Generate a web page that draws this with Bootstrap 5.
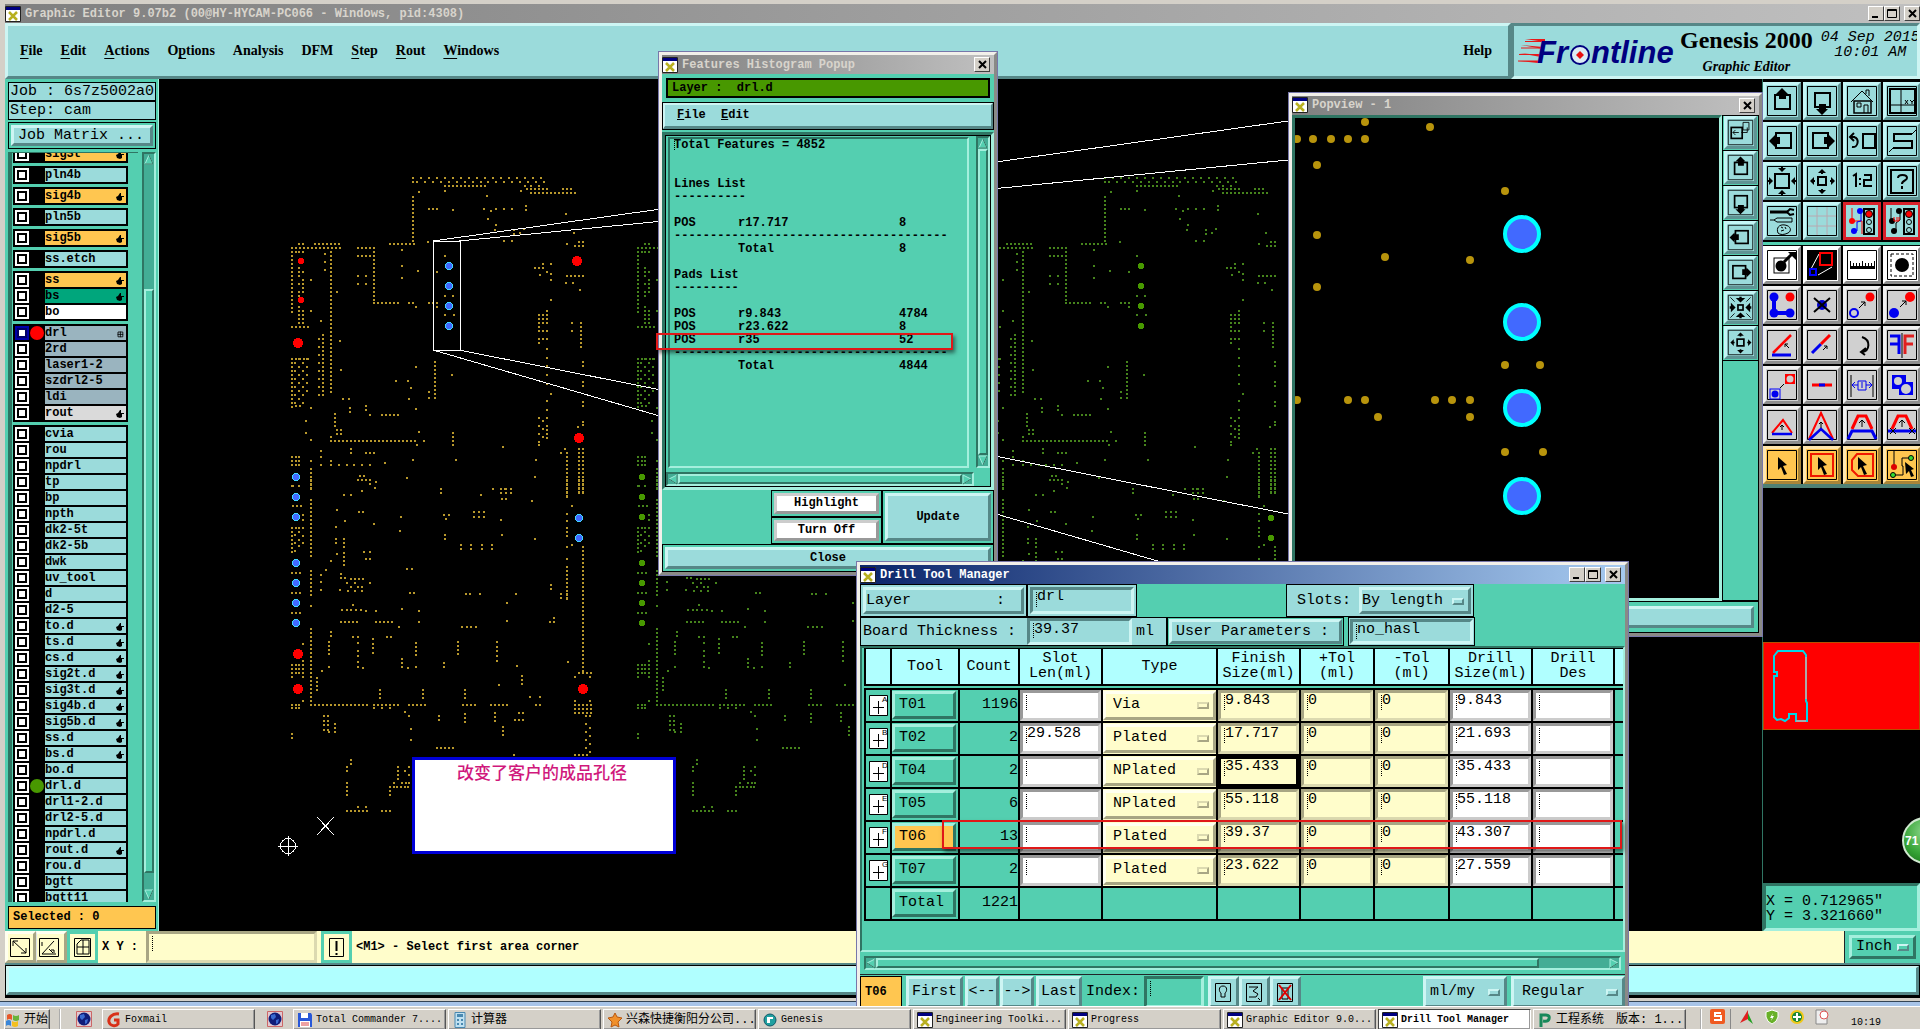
<!DOCTYPE html>
<html lang="en">
<head>
<meta charset="utf-8">
<meta name="viewport" content="width=device-width, initial-scale=1">
<title>Graphic Editor 9.07b2</title>
<link href="https://cdn.jsdelivr.net/npm/bootstrap@5.3.0/dist/css/bootstrap.min.css" rel="stylesheet">
<style>
:root{--teal:#54cfb0;--teal-d:#2f7563;--teal-l:#a4efdd;--cy:#9bdbdb;--cy-d:#568787;--cy-l:#cdf5f3;--ye:#fffdcb;--gr:#d4d0c8;--or:#ffc650}
body{font-family:"Liberation Mono","Noto Sans CJK SC",monospace;font-size:15px;line-height:18px;color:#000;background:#000}
button,input,select{font:inherit;color:inherit;border-radius:0;padding:0;margin:0}
button{text-align:left}
.desk{height:100vh}
.t12{font-size:12px;line-height:13px;font-weight:700}
.cy{background:var(--cy)}.teal{background:var(--teal)}.ye{background:var(--ye)}.orng{background:var(--or)}
.up{border:3px solid;border-color:var(--cy-l) var(--cy-d) var(--cy-d) var(--cy-l)}
.dn{border:3px solid;border-color:var(--cy-d) var(--cy-l) var(--cy-l) var(--cy-d)}
.teal.up{border-color:var(--teal-l) var(--teal-d) var(--teal-d) var(--teal-l)}
.teal.dn{border-color:var(--teal-d) var(--teal-l) var(--teal-l) var(--teal-d)}
.ye.up{border-color:#fffff0 #a8a684 #a8a684 #fffff0}
.ye.dn{border-color:#a8a684 #dcdab0 #dcdab0 #a8a684}
.wh{background:#fff}.wh.dn{border-color:#999 #ccc #ccc #999}.wh.up{border-color:#ccc #999 #999 #ccc}
.ln{border:1px solid #000}
.up,.dn{outline:0}
/* window chrome */
.frame{border:3px solid;border-color:#f2f0ea #8a8a86 #8a8a86 #f2f0ea;background:var(--gr);box-shadow:0 0 0 1px #77a}
.tbar{height:19px;background:linear-gradient(90deg,#808080,#c0c0c0);color:#d8d4cc;font-size:12px;font-weight:700;gap:4px}
.tbar.on{background:linear-gradient(90deg,#0a246a,#a6caf0);color:#fff}
.cap{width:16px;height:15px;background:var(--gr);border:1px solid;border-color:#fff #404040 #404040 #fff;display:flex}
.cap svg{width:14px;height:13px}
.app{border-left:5px solid var(--gr);border-top:4px solid var(--gr)}
.menubar{height:56px}
.menubar nav{font-family:"Liberation Serif",serif;font-weight:700;font-size:14px}
.menubar nav a{color:#000;text-decoration:none;margin-right:18px}
.menubar u{text-underline-offset:3px}
.brandbox{width:409px;border-color:var(--cy-d) var(--cy-l) var(--cy-l) var(--cy-d)}
.gen{font:700 24px/28px "Liberation Serif",serif}
.ged{font:italic 700 14px/18px "Liberation Serif",serif}
.clock{font-style:italic;line-height:15px;font-size:15px;white-space:nowrap}
/* layer list */
.side{width:154px;padding:3px 2px 2px 3px;border-right:1px solid var(--teal-l)}
.jobline{height:19px;padding-left:1px;white-space:nowrap;overflow:hidden}
.jm{height:27px;margin:2px 0 3px;padding:2px}
.layers{border-left:4px solid var(--teal-d);border-top:1px solid var(--teal-d);padding:0 10px 0 1px}
.stack{margin-top:-8px}
.grp{background:#000;padding:1px;margin-bottom:3px}
.lay{height:16px;padding:1px}
.lay input{appearance:none;width:14px;height:14px;border:2px solid #fff;background:#fff;box-shadow:inset 0 0 0 2px #000;flex:none}
.lay input:checked{border-color:#00a;box-shadow:inset 0 0 0 2px #006}
.bul{width:16px;height:14px;flex:none;display:flex;justify-content:center}
.bul i{width:14px;height:14px;border-radius:50%}
.lay label{flex:1;height:14px;line-height:14px;position:relative;background:var(--cy);overflow:hidden;white-space:nowrap}
.lay svg{position:absolute;right:2px;top:4px;width:8px;height:8px}
.vbar{width:14px;background:#43ad95;border:2px solid;border-color:var(--teal-d) var(--teal-l) var(--teal-l) var(--teal-d)}
.hbar{height:14px;background:#43ad95;border:2px solid;border-color:var(--teal-d) var(--teal-l) var(--teal-l) var(--teal-d)}
.ar{width:10px;height:11px;flex:none;display:block}
.thumb{background:var(--teal);border:2px solid;border-color:var(--teal-l) var(--teal-d) var(--teal-d) var(--teal-l)}
/* tool palette */
.pal{width:158px;border-left:1px solid var(--teal-d);padding-top:3px}
.grid4{display:grid;grid-template-columns:repeat(4,38px);grid-auto-rows:38px;gap:2px}
.tool{width:38px;height:38px;border:3px solid;padding:0;display:block;background:var(--cy);border-color:#c4f6f6 #5f9494 #5f9494 #c4f6f6}
.tool svg{width:32px;height:32px;display:block}
.tool.g{background:#d0d0d0;border-color:#f0f0f0 #8d8d8d #8d8d8d #f0f0f0}
.tool.w{background:#fff;border-color:#fff #8d8d8d #8d8d8d #fff}
.tool.o{background:#ffc650;border-color:#ffe6ae #a88438 #a88438 #ffe6ae}
.tool.r{border-color:#d8202a}
.mini{width:33px;height:33px}.mini svg{width:27px;height:27px}
.caret{background-image:repeating-linear-gradient(#000 0 1px,transparent 1px 2px);background-size:1px 16px;background-repeat:no-repeat;background-position:3px 2px}
.pick{position:relative;display:flex}
.pick select{appearance:none;background:transparent;border:0;width:100%;outline:0;color:#000}
.pick:after{content:"";position:absolute;right:4px;top:50%;margin-top:-3px;width:12px;height:7px;border:2px solid;border-color:var(--cy-l) var(--cy-d) var(--cy-d) var(--cy-l)}
.ye.pick:after{border-color:#dcdab0 #a8a684 #a8a684 #dcdab0}
.sq{width:31px;height:32px;padding:0}.sq svg{width:24px;height:24px;display:block}
/* free windows */
.feat{left:659px;top:52px;width:338px;height:523px}
.popv{left:1289px;top:93px;width:473px;height:543px}
.drill{left:857px;top:562px;width:771px;height:460px}
.note{left:412px;top:757px;width:264px;height:97px;border:3px solid #0000d8;background:#fff;color:#d0187c;font:500 17px/24px "Noto Sans CJK SC",sans-serif;padding-right:4px}
.mark{border:2px solid #e01818;box-shadow:2px 3px 4px rgba(0,0,0,.5);pointer-events:none;background:none;padding:0}
.mark.m1{left:656px;top:333px;width:297px;height:17px}
.mark.m2{left:942px;top:820px;width:680px;height:29px}
.rowl{display:grid;grid-template-columns:64px 161px 1fr}
.blk{margin-bottom:13px;white-space:pre}
.ball{right:-29px;top:817px;width:47px;height:47px;border-radius:50%;background:radial-gradient(circle at 50% 30%,#8fd88f,#36a436 60%,#187018);border:2px solid #cfe8cf;color:#fff;font:700 12px/44px "Liberation Sans",sans-serif;padding-left:1px}
.dt{table-layout:fixed;width:764px;border-collapse:collapse}
.dt th{background:#b0ffff;border:2px solid #000;border-top-width:1px;font-weight:400;text-align:center;height:36px;padding:0;line-height:15px;white-space:nowrap;vertical-align:middle}
.dt tbody:before{content:"";display:block;height:2px}
.dt td{border:2px solid #000;height:33px;padding:0;background:var(--teal);vertical-align:middle}
.dt td>input,.dt td>.pick{width:100%;height:31px;display:block}
.dt td>input{padding:0 0 9px 4px;border-width:3px}
.dt td>.pick{display:flex;height:29px;margin:1px 0}
.dt .pick select{padding-left:7px}
.dt td.y{background:var(--ye)}.dt td.w0{background:#fff}
.tb{width:64px;height:28px;display:block;padding-left:4px}
.abox{width:19px;height:21px;display:block;margin:auto}
.bb{height:34px;white-space:nowrap;padding-top:1px}
.task{height:23px;background:var(--gr);border-top:1px solid #fff;z-index:30;font:10px/18px "Liberation Mono","Noto Sans CJK SC",monospace;position:relative;padding-top:2px}
.task button{height:21px;width:153px;margin-right:2px;background:var(--gr);border:1px solid;border-color:#fff #555 #555 #fff;box-shadow:inset -1px -1px #999;display:flex;align-items:center;gap:3px;padding-left:3px;flex:none;white-space:nowrap;overflow:hidden}
.task .cn{font-size:12px}
.task svg{flex:none}
.task button.act{background:#fff;border-color:#444 #fff #fff #444;font-weight:700}
.blue{height:5px;background:#a8c4e8;border-top:1px solid #345}
.msgbar{height:35px;padding:1px 1px 3px;background:#000;border-top:2px solid #568787}
.msgbar div{height:29px;background:#b0ffff;border-width:2px 3px 3px}
.statbar{height:32px}
.statbar .on1{border-color:var(--teal)}
.rule{height:3px;margin:2px 0 1px}
.rule2{height:4px;background:#4f8074}
.thumbmap{height:88px;background:#f00;border:1px solid #b85000}
.sunk{border:3px solid;border-color:var(--teal-d) var(--teal-l) var(--teal-l) var(--teal-d)}
.laybar{background:#489800;border:2px solid #000;line-height:16px;white-space:pre}
</style>
</head>
<body class="overflow-hidden">
<svg width="0" height="0" class="position-absolute">
<symbol id="win" viewBox="0 0 16 16"><path fill="#fff" stroke="#222" d="M.5.5h15v15H.5z"/><path fill="#000080" d="M1 1h14v3H1z"/><path stroke="#b8b020" stroke-width="2.5" d="M4 6l8 8M12 6l-8 8"/></symbol>
<symbol id="hand" viewBox="0 0 8 8"><path d="M0 4l2-1 2-3h1v3h3v1H6v3L4 8 1 7z"/></symbol>
<symbol id="cx" viewBox="0 0 14 13"><path stroke="#000" stroke-width="2" d="M4 3l7 7M11 3l-7 7"/></symbol>
<symbol id="cm" viewBox="0 0 14 13"><path fill="#000" d="M3 9h6v2H3z"/></symbol>
<symbol id="cq" viewBox="0 0 14 13"><path fill="none" stroke="#000" d="M2.500 2.500h9v8h-9zM2 3.500h10"/></symbol>
<symbol id="up" viewBox="0 0 10 11"><path fill="#54cfb0" stroke="#a4efdd" d="M5 1L1 10h8z"/><path stroke="#2f7563" d="M5 1l4 9H1" fill="none"/></symbol>
<symbol id="dw" viewBox="0 0 10 11"><path fill="#54cfb0" stroke="#a4efdd" d="M5 10L1 1h8z"/><path stroke="#2f7563" d="M9 1L5 10" fill="none"/></symbol>
<symbol id="lf" viewBox="0 0 10 11"><path fill="#54cfb0" stroke="#a4efdd" d="M1 5l8-4v9z"/><path stroke="#2f7563" d="M9 1v9L1 5" fill="none"/></symbol>
<symbol id="rt" viewBox="0 0 10 11"><path fill="#54cfb0" stroke="#a4efdd" d="M9 5L1 1v9z"/><path stroke="#2f7563" d="M1 10l8-5" fill="none"/></symbol>
<symbol id="globe" viewBox="0 0 16 16"><path fill="#e0c8d0" stroke="#c66" d="M.5.5h15v15H.5z"/><circle cx="8" cy="8" r="6.500" fill="#101c78"/><path fill="#3a6ad0" d="M4 4l4-1 1 3-3 3-2-2zM9 9l3-1-1 4-2 1z"/></symbol>
</svg>

<div class="desk d-flex flex-column position-relative overflow-hidden">
 <main class="app flex-fill d-flex flex-column overflow-hidden">
  <div class="tbar d-flex align-items-center flex-shrink-0"><svg width="16" height="16"><use href="#win"/></svg><span class="flex-fill">Graphic Editor 9.07b2 (00@HY-HYCAM-PC066 - Windows, pid:4308)</span>
   <span class="d-flex"><span class="cap"><svg><use href="#cm"/></svg></span><span class="cap"><svg><use href="#cq"/></svg></span></span><span class="cap"><svg><use href="#cx"/></svg></span></div>
  <header class="menubar d-flex cy flex-shrink-0">
   <nav class="up flex-fill d-flex align-items-center ps-2">
    <a class="ms-1" href="#"><u>F</u>ile</a><a href="#"><u>E</u>dit</a><a href="#"><u>A</u>ctions</a><a href="#">O<u>p</u>tions</a><a href="#">Analysis</a><a href="#">DFM</a><a href="#"><u>S</u>tep</a><a href="#"><u>R</u>out</a><a href="#"><u>W</u>indows</a><a class="ms-auto me-3" href="#">Help</a>
   </nav>
   <div class="brandbox up d-flex cy overflow-hidden ps-1">
    <svg width="162" height="48" viewBox="0 0 162 48" class="flex-shrink-0"><g fill="#e81818"><path d="M7 13l20 0v3zM3 19l22 2v2zM1 27l22 2v2zM0 35l20 0v2z"/><path d="M7 15.500h17M3 22h20M1 28.500h20M0 35h20" stroke="#e81818"/></g><g fill="#000080" font-family="Liberation Sans" font-style="italic" font-weight="700" font-size="31"><text x="19" y="37">Fr</text><text x="73" y="37">ntline</text></g><circle cx="62" cy="29" r="9" fill="#dcecf4" stroke="#000080" stroke-width="2"/><path fill="#e81010" d="M62 25l4 4-4 4-4-4z"/></svg>
    <div class="text-center flex-shrink-0"><div class="gen">Genesis 2000</div><div class="ged pt-1">Graphic Editor</div></div>
    <div class="clock text-center ps-2 pt-1">04 Sep 2015<br>10:01 AM</div>
   </div>
  </header>
  <div class="d-flex flex-fill overflow-hidden bg-black">
   <aside class="side teal d-flex flex-column flex-shrink-0">
    <div class="jobline cy ln">Job : 6s7z5002a0</div><div class="jobline cy ln">Step: cam</div>
    <div class="ln jm"><button class="cy up w-100 h-100 d-block ps-1 lh-1">Job Matrix ...</button></div>
    <div class="d-flex flex-fill overflow-hidden">
     <div class="layers flex-fill overflow-hidden t12"><div class="stack" id="stack"></div></div>
     <div class="vbar d-flex flex-column ms-1"><svg class="ar"><use href="#up"/></svg><div class="flex-fill d-flex flex-column pb-3"><div class="thumb flex-fill" id="vth"></div></div><svg class="ar"><use href="#dw"/></svg></div>
    </div>
    <div class="ln orng t12 mt-1 ps-1 py-1">Selected : 0</div>
   </aside>
   <section class="flex-fill position-relative overflow-hidden"><svg id="board" width="1602" height="852" viewBox="159 80 1602 852" class="position-absolute top-0 start-0" shape-rendering="crispEdges"></svg></section>
   <aside class="pal d-flex flex-column flex-shrink-0 overflow-hidden">
    <div class="grid4" id="g1"></div>
    <div class="teal rule"></div>
    <div class="grid4" id="g2"></div>
    <div class="rule2"></div>
    <div class="flex-fill"></div>
    <div class="thumbmap"><svg width="50" height="86"><path fill="none" stroke="#00d8e8" stroke-width="2" d="M14 8h25l3 4v46l1 2v18H32v-7h-7v4l-4 3-4-2-4 1-3-3V33h3v-4h-3V13z"/><path fill="none" stroke="#aaa" stroke-width="2" d="M42 14v42M32 78h10"/></svg></div>
    <div class="flex-fill"></div>
    <div class="teal dn w-100 pt-2 pb-1 text-nowrap"><div class="lh-1">X = 0.712965"</div><div class="lh-1">Y = 3.321660"</div></div>
   </aside>
  </div>
  <footer class="statbar d-flex ye flex-shrink-0">
   <button class="sq ye up" title="Zoom"><svg viewBox="0 0 24 24" fill="none" stroke="#000"><path d="M2.500 3.500h19v18h-19zM5 6l13 12M5 11V6h5M18 13v5h-5"/></svg></button>
   <button class="sq ye up border-start" title="Angle"><svg viewBox="0 0 24 24" fill="none" stroke="#000"><path d="M2.500 3.500h19v18h-19zM5 19L17 6M5 7v4M5 19h14M12 14l4 4M14 15h3v3"/></svg></button>
   <button class="sq ye up on1" title="Snap"><svg viewBox="0 0 24 24" fill="none" stroke="#000"><path d="M4.500 3.500h16v18h-16zM7 19V9l4-4h8v14zM7 12h12M13 5v14"/></svg></button>
   <label for="xy" class="t12 align-self-center px-1 text-nowrap">X Y :</label>
   <input id="xy" class="ye dn caret h-100 mx-1" style="width:171px">
   <button class="sq ye up on1" title="Messages"><svg viewBox="0 0 24 24" fill="none" stroke="#000"><path d="M5.500 3.500h14v18h-14z"/><path stroke-width="2" d="M12.500 6v10M12.500 18v2"/></svg></button>
   <div class="flex-fill t12 align-self-center ps-1">&lt;M1&gt; - Select first area corner</div>
   <div class="teal p-1 border-start border-dark"><div class="pick teal up h-100" style="width:67px"><select aria-label="Units" class="ps-1"><option>Inch</option></select></div></div>
  </footer>
  <div class="msgbar flex-shrink-0"><div class="up"></div></div>
  <div style="height:3px;background:#d4d0c8"></div>
 </main>
 <div class="blue flex-shrink-0"></div>
 <div class="task d-flex flex-shrink-0 align-items-start overflow-hidden" id="task"></div>

 <!-- board note -->
 <div class="note position-absolute text-center">改变了客户的成品孔径</div>

 <!-- popview -->
 <section class="popv frame position-absolute d-flex flex-column">
  <div class="tbar d-flex align-items-center"><svg width="16" height="16"><use href="#win"/></svg><span class="flex-fill">Popview - 1</span><span class="cap me-1"><svg><use href="#cx"/></svg></span></div>
  <div class="d-flex flex-fill overflow-hidden">
   <div class="bg-black flex-fill overflow-hidden sunk"><svg id="pv" width="422" height="486" viewBox="1295 118 422 486"></svg></div>
   <div class="teal ln" style="width:37px"><div class="d-flex flex-column" id="g3"></div></div>
  </div>
  <div class="teal ln p-1 pb-0"><div class="cy up mb-1" style="height:22px"></div></div>
 </section>

 <!-- histogram -->
 <section class="feat frame position-absolute d-flex flex-column">
  <div class="tbar d-flex align-items-center"><svg width="16" height="16"><use href="#win"/></svg><span class="flex-fill">Features Histogram Popup</span><span class="cap me-1"><svg><use href="#cx"/></svg></span></div>
  <div class="teal flex-fill d-flex flex-column t12">
   <div class="m-1 ps-1 laybar">Layer :  drl.d</div>
   <div class="ln"><div class="cy up ps-2 py-1" style="border-width:2px 2px 3px"><span class="mx-1"><u>F</u>ile</span> <span class="mx-1"><u>E</u>dit</span></div></div>
   <div class="flex-fill d-flex flex-column sunk" style="margin-top:2px"><div class="ln flex-fill d-flex flex-column">
    <div class="d-flex flex-fill">
     <div class="teal dn flex-fill ps-1" style="margin:1px 7px 4px 2px;border-width:2px">
      <div class="blk caret" style="margin-bottom:26px;background-position:0 0;background-size:1px 12px">Total Features = 4852</div>
      <div class="blk">Lines List
----------</div>
      <div class="blk"><div class="rowl"><span>POS</span><span>r17.717</span><span>8</span></div><div>--------------------------------------</div><div class="rowl"><span></span><span>Total</span><span>8</span></div></div>
      <div class="blk">Pads List
---------</div>
      <div class="blk"><div class="rowl"><span>POS</span><span>r9.843</span><span>4784</span></div><div class="rowl"><span>POS</span><span>r23.622</span><span>8</span></div><div class="rowl"><span>POS</span><span>r35</span><span>52</span></div><div>--------------------------------------</div><div class="rowl"><span></span><span>Total</span><span>4844</span></div></div>
     </div>
     <div class="vbar d-flex flex-column mb-1"><svg class="ar"><use href="#up"/></svg><div class="thumb flex-fill"></div><svg class="ar"><use href="#dw"/></svg></div>
    </div>
    <div class="hbar d-flex me-3"><svg class="ar"><use href="#lf"/></svg><div class="thumb flex-fill"></div><svg class="ar"><use href="#rt"/></svg></div>
   </div></div>
   <div class="d-flex"><div class="flex-fill"></div>
    <div style="width:111px"><div class="ln" style="padding:2px"><button class="wh up w-100 text-center d-block" style="height:21px">Highlight</button></div><div class="ln" style="padding:2px"><button class="wh up w-100 text-center d-block" style="height:21px">Turn Off</button></div></div>
    <div class="ln" style="width:112px;padding:2px"><button class="cy up w-100 h-100 text-center">Update</button></div></div>
   <div class="ln" style="padding:2px"><button class="cy up w-100 text-center d-block" style="height:22px;line-height:14px">Close</button></div>
  </div>
 </section>

 <!-- drill tool manager -->
 <section class="drill frame position-absolute">
  <div class="tbar on d-flex align-items-center"><svg width="16" height="16"><use href="#win"/></svg><span class="flex-fill">Drill Tool Manager</span><span class="d-flex"><span class="cap"><svg><use href="#cm"/></svg></span><span class="cap"><svg><use href="#cq"/></svg></span></span><span class="cap me-1"><svg><use href="#cx"/></svg></span></div>
  <div class="teal">
   <div class="d-flex" style="height:33px">
    <div class="ln cy" style="width:167px;padding:2px"><button class="cy up w-100 h-100 d-flex align-items-center justify-content-between pe-3"><span>Layer</span><span>:</span></button></div>
    <div class="ln cy" style="width:110px;padding:2px"><input aria-label="Layer" class="cy dn caret w-100 h-100 ps-1 pb-2" value="drl"></div>
    <div class="ln cy d-flex align-items-center" style="width:188px;margin-left:149px;padding:2px"><label for="slots" class="px-2">Slots:</label><div class="pick cy up h-100 flex-fill"><select id="slots"><option>By length</option></select></div></div>
   </div>
   <div class="d-flex" style="height:29px">
    <div class="ln cy d-flex align-items-center" style="width:307px;padding-left:2px"><label for="bt" class="flex-fill text-nowrap">Board Thickness :</label><input id="bt" class="cy dn caret h-100 ps-1 pb-1" style="width:105px" value="39.37"><span class="px-1 me-2">ml</span></div>
    <div class="ln teal" style="width:177px;padding:1px"><button class="cy up w-100 h-100 ps-1 lh-1">User Parameters :</button></div>
    <div class="ln cy ms-1" style="width:127px;padding:1px"><input aria-label="User parameters" class="cy dn caret w-100 h-100 ps-1 pb-1" value="no_hasl"></div>
   </div>
   <div class="overflow-hidden" style="height:306px;border:2px solid;border-color:#2f7563 #a4efdd #a4efdd #2f7563;padding-left:2px"><table class="dt"><colgroup><col style="width:26px"><col style="width:68px"><col style="width:60px"><col style="width:83px"><col style="width:115px"><col style="width:83px"><col style="width:74px"><col style="width:75px"><col style="width:83px"><col style="width:82px"><col style="width:15px"></colgroup>
    <thead><tr><th></th><th>Tool</th><th>Count</th><th>Slot<br>Len(ml)</th><th>Type</th><th>Finish<br>Size(ml)</th><th>+Tol<br>(ml)</th><th>-Tol<br>(ml)</th><th>Drill<br>Size(ml)</th><th>Drill<br>Des</th><th></th></tr></thead><tbody id="dtb"></tbody></table></div>
   <div class="hbar d-flex m-1"><svg class="ar"><use href="#lf"/></svg><div class="thumb" style="width:88%"></div><div class="flex-fill"></div><svg class="ar"><use href="#rt"/></svg></div>
   <div class="d-flex bb border-top border-dark">
    <div class="orng ln t12 d-flex align-items-center ps-1" style="width:42px">T06</div>
    <button class="cy up ms-1 text-center" style="width:57px">First</button><button class="cy up text-center" style="width:34px;margin-left:2px">&lt;--</button><button class="cy up text-center" style="width:34px;margin-left:1px">--&gt;</button><button class="cy up text-center" style="width:46px;margin-left:2px">Last</button>
    <label for="ix" class="ps-1 align-self-center">Index:</label><input id="ix" class="teal dn caret ms-1" style="width:60px">
    <button class="cy up sq ms-1" title="Light"><svg viewBox="0 0 24 24" fill="none" stroke="#000"><path d="M4.500 3.500h15v18h-15zM12 6c-5 0-4 6-2 7v4h4v-4c2-1 3-7-2-7z"/></svg></button><button class="cy up sq" title="Next"><svg viewBox="0 0 24 24" fill="none" stroke="#000"><path d="M4.500 3.500h15v18h-15zM7 7h9l-5 4 5 3-2 3H7M16 18l2 2"/></svg></button><button class="cy up sq" title="Delete"><svg viewBox="0 0 24 24" fill="none" stroke="#000"><path d="M4.500 3.500h15v18h-15zM9 8h6v11H9z"/><path stroke="#d00" stroke-width="2" d="M6 5l12 15M18 5L6 20"/></svg></button>
    <div class="pick cy up ms-auto" style="width:84px"><select aria-label="Unit" class="ps-1"><option>ml/my</option></select></div><div class="pick cy up ms-1" style="width:114px"><select aria-label="Mode" class="ps-2"><option>Regular</option></select></div>
   </div>
  </div>
 </section>
 <div class="mark m1 position-absolute"></div><div class="mark m2 position-absolute"></div>
 <div class="ball position-absolute">71</div>
</div>

<script src="https://cdn.jsdelivr.net/npm/bootstrap@5.3.0/dist/js/bootstrap.bundle.min.js"></script>
<script>
const $=id=>document.getElementById(id);
// layers: name|colour|flags (h = hand, m = matrix mark)
const groups=["sig3t|o|h","pln4b","sig4b|o|h","pln5b","sig5b|o|h","ss.etch","ss|o|h,bs|g|h,bo|w","drl|s|m,2rd|s,laser1-2|s,szdrl2-5|s,ldi|s,rout|l|h",
"cvia,rou,npdrl,tp,bp,npth,dk2-5t,dk2-5b,dwk,uv_tool,d,d2-5,to.d||h,ts.d||h,cs.d||h,sig2t.d||h,sig3t.d||h,sig4b.d||h,sig5b.d||h,ss.d||h,bs.d||h,bo.d,drl.d,drl1-2.d,drl2-5.d,npdrl.d,rout.d||h,rou.d,bgtt,bgtt11"];
const col={o:'#ffc650',g:'#00a67c',w:'#fff',s:'#9ab4bf',l:'#dadada'};let n=0;
$('stack').innerHTML=groups.map(g=>'<div class="grp">'+g.split(',').map(r=>{const [nm,c,f]=r.split('|');n++;
 const b=nm=='drl'?'#f00':nm=='drl.d'?'#489800':'';
 return `<div class="lay d-flex"><input type="checkbox" id="l${n}"${nm=='drl'?' checked':''}><span class="bul">${b?`<i style="background:${b}"></i>`:''}</span><label for="l${n}"${c?` style="background:${col[c]}"`:''}>${nm}${f=='h'?'<svg><use href="#hand"/></svg>':f=='m'?'<svg viewBox="0 0 10 10"><path fill="none" stroke="#000" d="M2.500 2.500h6v6h-6zM5.500 2v7M2 5.500h7"/></svg>':''}</label></div>`}).join('')+'</div>').join('');
$('vth').style.marginTop='124px';
$('vth').parentNode.style.background='#43ad95';

// drill pattern: "x y nx ny stepx stepy" in thirds of a pixel
const A="399 57 17 1 24;399 69;411 69 9 1 24;624 69 8 1 24;495 81 11;735 81;753 81;777 81;741 90 6;849 90 3;753 102 12;417 99;495 96;621 111;723 96;519 153;447 150 3;612 150;633 156;648 150 3 1 24;738 141 1 2;624 180;648 198;645 213;702 213 1 2;732 210;720 222;672 246;696 246;858 165;882 222;399 114 1 12;330 255 7;444 249;366 273;366 321;366 357;414 336;861 255;885 261;897 249 2 2;57 255 2;105 255 7;36 267 13;36 279 4 1 11;36 291 1 15;57 327 1 2;69 339;57 351;69 363;57 375 2;69 387;57 399 2;57 411;57 444;69 456;57 456 2 4;36 504 5;93 363;93 456;135 285;135 309;135 333;153 279 1 36;171 399;123 486;117 540 1 8 12 24;129 528 1 16;180 546;183 633;234 267 5;282 279 1 13;234 291 4;234 351 2 2 24 24;282 432 7;387 432 2;408 444;447 432 3;471 444;495 291;471 339;495 411 2 1 24;495 468;522 468;36 600 5;36 600 1 13;45 612 1 6 12 24;57 600 1 6 12 24;69 612 1 6 12 24;81 600 1 5 12 24;48 741 2;465 609 1 10;447 699;447 717;408 624;516 648;348 666;384 666;393 687;387 720;408 750;189 720 2 1 18;210 747 1 2;258 741 1 2;270 768;306 768 5;165 765 1 4;171 813 2 2;93 747;78 786;78 822;93 843;153 834;153 846 22;411 858;417 819;432 846;519 822 1 4;213 870 1 2;258 882 3;123 876 1 2 12 18;36 894 3 3 11;93 906;93 930 1 6;123 918;153 906 1 2;177 918 5 1 23;315 912;399 903;528 903;669 864;381 957;240 951 2;234 963 4;270 975;288 969;285 987;246 996;192 1008 2 1 21;483 990 1 2;603 1008;639 990;663 990 2;693 990;663 1002 3 1 15;768 903;765 954;765 327 3;789 315 2 1 24;801 339;813 345;813 363;780 348;861 351 5;858 372 2 1 21;900 393;813 423;801 456;777 468 3 2;777 492 1 3;789 492 2;801 516;789 516;777 540 2;777 552;801 540;801 570 1 5 12 26;813 705;801 726 1 2 12 26;777 777;789 786;801 777;777 801 1 3 12 24;789 810 1 2 12 24;801 801 1 4;777 858;903 492 1 7;876 492 1 2 12 24;909 609 1 2;909 669 1 2;909 729 1 2;909 789;894 804;909 798;855 870;843 882;861 882 1 12;897 870 2 12;39 981 2 1 18";
const B="93 3 1 3;93 63 1 6;93 123 1 10;36 21 2 1 21;39 81 3;69 108;69 123;36 147 4 1 11;36 159 1 6;45 168;57 159;69 171;57 183;45 192;57 201;69 192;45 216;36 282 3;36 342 3;36 402 3;93 276 1 7;93 381;93 450 1 19;69 495;36 558 4 3 11;36 594;69 594;69 546;36 678 3 2 11 9;69 666;93 678 15;282 678 7;282 687 3 1 24;387 678 5;549 678 4;633 678 5;768 678 2;750 654 2 1 30;300 633 1 3;429 633 1 3;555 633 1 3;375 699;387 711;477 711 1 2;555 705 1 3;645 702 1 3;669 744 1 3;717 702 2;705 723 3;393 750 1 2 1 33;657 618;711 561;726 591 1 3;471 807 5;132 711 2 4 12 14;165 735 1 3;147 759;36 765 1 2;213 843 1 2;201 863 1 2;201 912 1 4;201 996 6;234 984 2 1 24;306 996 3 1 12;354 863 1 4;387 863;375 876;387 888;342 912;366 912 3 1 11;330 924 6 1 11;330 936 1 2;897 582 4;885 594;930 594;885 666;930 666;885 678 5 3;918 711 2;918 735 1 4 1 24;930 747 1 4 1 24;885 829 4;702 828;909 204 1 32;861 3 1 5;897 3 2 4;876 81;861 105;861 126;861 147 1 3;861 204;876 198;861 240;861 264 1 9;843 345 2 2 18;813 318 1 2;822 417;810 429 2;864 549;234 3 4;288 9;246 36;192 48 2 1 21;171 93;237 99 2;168 144;195 126;282 135;363 114;360 156;168 180 1 2;192 180 1 3;192 222 1 4;171 225;153 246;138 273;123 288 1 3 1 22;252 219 2 1 18;258 240 2;183 285 1 2;195 297;213 300 4;201 312;225 312;213 324;234 324 2;204 336 3 1 21;270 312;180 333;381 270 2 1 15;390 342 2;558 345 2;600 345;708 345;681 372;681 426;219 378;186 393 5 1 14;258 396;288 396;366 390;417 396 1 2 1 33;183 429 5;288 429 5;357 444;546 444 4 1 14;153 459 1 2;147 489 1 4;219 474 2 1 15;234 492;234 516 1 4 1 16;249 567;279 480 1 4 1 14;321 474 2;408 492 1 4;366 540 1 3;384 567;408 564;492 552 1 2;534 489 1 4;651 489 1 5 1 14;147 564;126 576;111 597 1 4;483 30 1 2;603 48;639 30;663 30 3 2 15;667 60 2;756 66;492 108 2 1 15;498 120;495 168 1 2;582 99 3 2 15 15;663 123;666 168;765 180;543 198 4 2 31";
let d='';
for(const [s,oy] of [[A,160],[B,480]])for(const e of s.split(';')){const [x,y,a=1,b=1,sx=12,sy=12]=e.split(' ').map(Number);
 for(let i=0;i<a;i++)for(let j=0;j<b;j++)d+=`M${Math.round(279+(x+i*sx)/3)} ${Math.round(oy+(y+j*sy)/3)}h2`;}
const blues=[[507,322],[507,382],[507,441],[507,501],[48,953],[48,1013],[48,1073],[48,1213],[48,1272],[48,1332],[48,1392],[897,1077],[897,1137]];
const reds=[[54,552,5],[891,306,5],[897,837,5],[63,306,3],[63,423,3],[54,1485,5],[54,1590,5],[909,1590,5]];
const P=(x,y)=>`cx="${280+Math.round(x/3)}" cy="${160+Math.round(y/3)}"`;
$('board').innerHTML=`<path id="dots" d="${d}" stroke="#b8982c" stroke-width="2"/>`+
 [346,692].map(o=>`<g transform="translate(${o})"><path d="${d}" stroke="#46841c" stroke-width="2"/>${blues.map(b=>`<circle ${P(...b)} r="3" fill="#489800"/>`).join('')}</g>`).join('')+
 blues.map(b=>`<circle ${P(...b)} r="3.500" fill="#4169ff" stroke="#40d8ff"/>`).join('')+reds.map(r=>`<circle ${P(r[0],r[1])} r="${r[2]}" fill="#f00"/>`).join('')+
 `<g fill="none" stroke="#fff"><path d="M433 242h27v109h-27zM433 242L1288 122M459 242L1288 161M459 351L1288 515M433 351L1288 600M317 818l17 18M334 818l-17 18M278 847h20M288 837v20"/><circle cx="288" cy="847" r="7.500"/></g>`;
$('pv').innerHTML=[[1365,122],[1430,127],[1297,139],[1313,139],[1331,139],[1348,139],[1365,139],[1317,165],[1505,191],[1317,235],[1385,257],[1470,260],[1317,287],[1505,365],[1540,365],[1297,400],[1348,400],[1365,400],[1435,400],[1452,400],[1470,400],[1378,417],[1470,417],[1505,452],[1543,452]].map(p=>`<circle cx="${p[0]}" cy="${p[1]}" r="4" fill="#b8940c"/>`).join('')+
 [234,322,408,496].map(y=>`<circle cx="1522" cy="${y}" r="17" fill="#4169ff" stroke="#00ffff" stroke-width="4"/>`).join('');

// tool icons, 32 x 32, framed
const F='<path fill="none" stroke="#000" d="M1.500 1.500h29v29h-29z"/>';
const box=(x,y,w,h,s=2)=>`<rect x="${x}" y="${y}" width="${w}" height="${h}" fill="none" stroke="#000" stroke-width="${s}"/>`;
const U='<path d="M16 3l6 6h-2v5h-7V9h-3z"/>',D='<path d="M16 30l6-6h-2v-5h-7v5h-3z"/>',L='<path d="M3 16l6-6v2h5v7H9v3z"/>',R='<path d="M29 16l-6-6v2h-5v7h5v3z"/>';
const tri=(x,y,r,k=1)=>`<path transform="translate(${x} ${y}) rotate(${r}) scale(${k})" d="M0-3l4 4H1v1h-2V1h-3z"/>`;
const ln=(p,c='#000',w=1)=>`<path fill="none" stroke="${c}" stroke-width="${w}" d="${p}"/>`;
const ci=(x,y,r,f='#000',s='none',w=1)=>`<circle cx="${x}" cy="${y}" r="${r}" fill="${f}" stroke="${s}" stroke-width="${w}"/>`;
const up=F+box(9,10,15,14)+U,dn=F+box(9,8,15,14)+D,lf=F+box(10,8,15,15)+L,rt=F+box(7,8,15,15)+R;
const zin=box(9,9,14,14)+tri(16,4,180)+tri(16,28,0)+tri(4,16,90)+tri(28,16,270)+F,zout=F+box(12,12,8,8)+tri(16,7,0)+tri(16,26,180)+tri(7,16,270)+tri(26,16,90);
const pin=F+box(13,13,6,6)+tri(16,6,180,1.400)+tri(16,26,0,1.400)+tri(6,16,90,1.400)+tri(26,16,270,1.400)+ln('M4 4l5 5M28 4l-5 5M4 28l5-5M28 28l-5-5');
const tl=x=>box(18,4,10,25)+ci(23,9,3.5,'#f00','#000')+ci(23,17,2.5,'none','#000')+ci(23,25,2.5,'none','#000')+x;
const cur='<path d="M12 8l9 8-4 1 4 8-3 1-3-8-3 3z"/>';
const tools=[['',up],['',dn],['',F+box(8,16,17,12,1.5)+ln('M5 17L16 6l11 11M20 9V5h3v6M18 28v-8h4v8M11 18h4v4h-4z')],['',F+box(4,4,25,24,2)+ln('M15 4v24M4 20h25M19 15l3 4M22 15l-3 4M24 15l2 2 2-2M26 17v2')],
['',lf],['',rt],['',F+box(17,9,12,14)+ln('M6 22c6 1 8-8 2-10M4 12h5M8 8l-4 4 4 4','#000',2)],['',F+ln('M26 9H8v7h18v7H7','#000',2)+ln('M26 9l4-4M7 23l-4 4')],
['',zin],['',zout],['',F+ln('M7 11l3-2v13M14 13v2M14 18v2M18 10h7v5h-7v6h8','#000',2)],['',F+box(5,5,22,23,2)+ln('M12 13c0-4 9-4 9 0 0 3-5 2-5 6M16 21v3','#000',2)],
['',F+ln('M4 7h18','#000',3)+ln('M28 5l-4-1-3 3 3 3 4-1','#000',2)+ln('M4 15h4l3-2h15v4H11l-3-2')+ln('M12 28c-2-5 1-9 7-8s7 6 3 8-8 2-10 0zM15 22l2 1M19 22l1 2M15 26l3-1')],['',F+ln('M2 11h28M2 21h28M11 2v28M21 2v28','#b8a8b0')],['r',tl(ln('M6 3v13h10v13','#f00')+ln('M15 6v10l-4 1v9','#00f')+ci(6,16,3,'#f00')+ci(14,6,3,'#00f')+ci(8,26,3,'#00f'))],['r',tl(ln('M5 3v13M14 6v9l-4 3v8')+ci(6,16,3)+ci(13,6,3)+ci(8,26,3)+ln('M8 12v4h5v-4M11 12v4','#f00'))]];
const BL='#0000f0';
const ed=[['w',F+box(8,9,15,15,1)+ci(15,17,5.500)+ln('M18 13l8-8','#000',3)+'<path d="M22 3h8v8z"/>'],['w','<path d="M1 1h30v30H1z"/>'+ln('M5 20L13 5M12 26l14-8','#fff')+'<rect x="14" y="4" width="12" height="12" fill="none" stroke="#f00" stroke-width="2"/><rect x="4" y="20" width="6" height="6" fill="none" stroke="#00f" stroke-width="2"/>'],['w',F+'<path d="M4 17h25v3H4z"/>'+ln('M4.500 12v6M7.500 14v4M10.500 14v4M13.500 14v4M16.500 12v6M19.500 14v4M22.500 14v4M25.500 14v4M28.500 12v6')],['w',F+'<rect x="5" y="5" width="22" height="22" fill="none" stroke="#000" stroke-dasharray="3 2"/>'+ci(16,16,7)],
['g',F+ln('M8 8v16h16',BL,4)+ci(8,8,4.5,BL)+ci(8,24,4.5,BL)+ci(24,24,4.5,BL)+ci(24,8,4.5,'#f00')],['g',F+ci(16,16,5,'#00c')+ln('M8 9l16 14M24 9L8 23','#000',2)],['g',F+ci(8,24,4,'none',BL,2)+ci(24,8,4.5,'#f00')+ln('M13 19l6-6M15 13h4v4')],['g',F+ci(8,24,5,BL)+ci(24,8,5,'#f00')+ln('M14 18l6-6M16 12h4v4')],
['g',F+ln('M7 24L25 6','#f00',2.5)+ln('M6 26h19',BL,3)+ln('M23 19l-4-4M19 18v-3h3')],['g',F+ln('M6 24l9-9',BL,3)+ln('M15 15l9-9','#f00',3)+ln('M17 21l4-4M18 17h3v3')],['g',F+ln('M16 8c9 3 8 14 0 15M20 19l-5 4 4 3','#000',2)],['g',F+ln('M4 7h9v18M4 15h9',BL,3)+ln('M28 7h-9v18M19 15h8','#e02020',3)+ln('M16 4v25')],
['g',F+'<rect x="19" y="5" width="10" height="10" fill="#f00"/>'+ci(24,10,3.500,'#d0d0d0')+'<rect x="4" y="20" width="10" height="10" fill="none" stroke="#00f"/>'+ci(9,25,3.5,BL)+ln('M14 19l4-4')],['g',F+ln('M6 16h20','#f00',3)+ln('M13 16h6',BL,3)],['g',F+ln('M5 6v22M27 6v22')+ln('M12 12h8v9h-8zM12 16H6l3-3M6 16l3 3M20 16h6l-3-3M26 16l-3 3M16 13v6',BL)],['g',F+`<path fill="${BL}" d="M6 6h14v7h7v13H13v-6H6z"/>`+ci(12,12,4,'#d0d0d0')+ci(20,20,5,'#d0d0d0')],
['g',F+ln('M6 24L17 11l9 13','#f00',2)+ln('M6 25h20',BL,2.5)+ln('M16 21v-5M14 18l2-2 2 2')],['g',F+ln('M3 30L15 4l12 26','#f00',2)+ln('M3 31l12-11 12 11',BL,2.5)+ln('M15 19v-6M13 15l2-2 2 2')],['g',F+ln('M6 20l6-13h8l6 13','#f00',3)+ln('M2 30l4-8h20l4 8',BL,3)+ln('M16 18v-6M13 14l3-3 3 3')],['g',F+ln('M6 20l6-13h8l6 13','#f00',3)+ln('M2 22h28',BL,3)+ln('M4 19l6 6M10 19l-6 6M23 19l6 6M29 19l-6 6M16 18v-6M13 14l3-3 3 3')],
['o',F+cur],['o',F+cur+ln('M5 5h22v22H5z','#f01800',2)],['o',F+cur+ln('M11 5h16v22H12l-6-6V11z','#f01800',2)],['o',F+ln('M8 2v16M7 26h10v-9h-1v-8h8M24 9l1 0')+ci(8,18,3,'#d00')+ci(25,9,2.5,'#3d3','#000')+ci(7,26,2.5,'#3d3','#000')+'<path d="M19 13l9 7-3 1 3 6-3 1-2-6-3 3z"/>']];
const mk=(a,c='')=>a.map(([k,s])=>`<button class="tool ${k} ${c}" aria-label="tool"><svg viewBox="0 0 32 32">${s}</svg></button>`).join('');
$('g1').innerHTML=mk(tools);$('g2').innerHTML=mk(ed);
$('g3').innerHTML=[F+box(5,10,13,13)+ln('M19 4h7v9h-7zM17 16h7v-6M7 16h7M10 13l-3 3 3 3'),up,dn,lf,rt,pin,zout].map(s=>`<div style="height:35px;padding:0 1px 1px;border-bottom:1px solid #000"><button class="tool mini" aria-label="view"><svg viewBox="0 0 32 32">${s}</svg></button></div>`).join('');

// drill table
const rows=[['A','T01',1196,'','Via','9.843','9.843'],['B','T02',2,'29.528','Plated','17.717','21.693'],['D','T04',2,'','NPlated','35.433','35.433'],['E','T05',6,'','NPlated','55.118','55.118'],['F','T06',13,'','Plated','39.37','43.307'],['G','T07',2,'','Plated','23.622','27.559']];
const inp=(c,v,l)=>`<td class="${c=='ye'?'y':'w0'}"><input class="${c} dn caret" aria-label="${l}" value="${v}"></td>`;
$('dtb').innerHTML=rows.map(r=>`<tr><td><svg class="abox" viewBox="0 0 19 21"><path fill="#fff" stroke="#000" d="M.5.5h18v20H.5z"/><path stroke="#000" d="M4 12.500h11M9.500 6v13"/><text x="13" y="7" font-size="8" font-family="Liberation Sans">${r[0]}</text></svg></td><td><button class="teal up tb"${r[1]=='T06'?' style="background:#ffc650"':''}>${r[1]}</button></td><td class="text-end">${r[2]}</td>${inp('wh',r[3],'Slot length')}<td class="y"><div class="pick ye up"><select aria-label="Type"><option>${r[4]}</option></select></div></td>${r[1]=='T04'?inp('ye',r[5],'Finish size').replace('<input','<input style="border-color:#000"'):inp('ye',r[5],'Finish size')}${inp('ye','0','Plus tolerance')}${inp('ye','0','Minus tolerance')}${inp('wh',r[6],'Drill size')}${inp('wh','','Drill designator')}<td></td></tr>`).join('')+
'<tr><td></td><td><button class="teal up tb">Total</button></td><td class="text-end">1221</td>'+'<td></td>'.repeat(8)+'</tr>';

// taskbar
const w='<svg width="16" height="16"><use href="#win"/></svg>',gl='<svg width="16" height="16" style="margin:2px 10px 0"><use href="#globe"/></svg>',ic=s=>`<svg width="16" height="16" viewBox="0 0 16 16">${s}</svg>`;
const tb=(i,t,c='')=>`<button class="${c}">${i}<span>${t}</span></button>`;
$('task').innerHTML=`<button class="cn ms-1" style="width:46px;padding:0">${ic('<path fill="#e8582a" d="M2 3q3-2 5 0v5q-3-2-5 0z"/><path fill="#6ab43a" d="M8 3q3 2 6 0v5q-3 2-6 0z"/><path fill="#3a86d8" d="M1 9q3-2 5 0v5q-3-2-5 0z"/><path fill="#f4c020" d="M7 9q3 2 6 0v5q-3 2-6 0z"/>')}<span>开始</span></button><span style="width:15px;height:20px;border-right:2px groove #fff;margin-left:-6px;margin-right:5px"></span>${gl}`+
tb(ic('<path fill="none" stroke="#d83018" stroke-width="3" d="M13 2C6 1 2 6 3 10s7 5 9 2V8H8"/>'),'Foxmail')+gl+
tb(ic('<path fill="#2858d8" d="M1 1h13l1 2v12H1z"/><path fill="#fff" d="M4 1h7v5H4zM3 9h10v6H3z"/><path stroke="#d44" d="M4 11h8M4 13h8"/>'),'Total Commander 7....')+
tb(ic('<path fill="#bfe0f0" stroke="#4888b0" d="M3 .5h10v15H3z"/><path fill="#4888b0" d="M5 2h6v3H5zM5 7h2v2H5zM9 7h2v2H9zM5 11h2v2H5zM9 11h2v2H9z"/>'),'计算器','cn')+
tb(ic('<path fill="#f0902c" stroke="#b85810" d="M8 1l2 4 5 1-4 4 1 5-4-2-4 2 1-5-4-4 5-1z"/>'),'兴森快捷衡阳分公司...','cn')+
tb(ic('<circle cx="8" cy="8" r="6" fill="#20a0a0" stroke="#105868"/><path fill="#fff" d="M5 5h6v2H8v4H5z"/>'),'Genesis')+tb(w,'Engineering Toolki...')+tb(w,'Progress')+tb(w,'Graphic Editor 9.0...')+tb(w,'Drill Tool Manager','act')+
tb(ic('<path fill="none" stroke="#18885a" stroke-width="3" d="M4 15V3h5q4 0 3 4-1 3-6 2"/>'),'工程系统　版本: 1...','cn')+
`<span style="width:14px;height:20px;border-right:2px groove #fff;margin-right:8px"></span>${ic('<rect width="15" height="15" rx="2" fill="#f05a20"/><path fill="none" stroke="#fff" stroke-width="2" d="M11 4H5v3h6v4H4"/>')}<span class="d-flex flex-fill ps-2 ms-1" style="border-left:1px solid #888;height:22px;gap:9px">${ic('<path fill="#e02020" d="M1 14L9 1v9z"/><path fill="#20a020" d="M9 4l5 11-5-4z"/>')}${ic('<path fill="#68b028" stroke="#fff" d="M8 1l6 2v5q-1 5-6 7-5-2-6-7V3z"/><path fill="#fff" d="M9 4l-3 5h2l-1 3 3-5H8z"/>')}${ic('<circle cx="8" cy="8" r="7" fill="#f0c818"/><circle cx="8" cy="8" r="5" fill="#188838"/><path stroke="#fff" stroke-width="2" d="M4 8h8M8 4v8"/>')}${ic('<path fill="#eee" stroke="#888" d="M2 1h9l2 3v11H2z"/><circle cx="10" cy="6" r="4" fill="#fff" stroke="#d55"/>')}<span style="padding:5px 0 0 12px">10:19</span></span>`;
</script>
</body>
</html>
